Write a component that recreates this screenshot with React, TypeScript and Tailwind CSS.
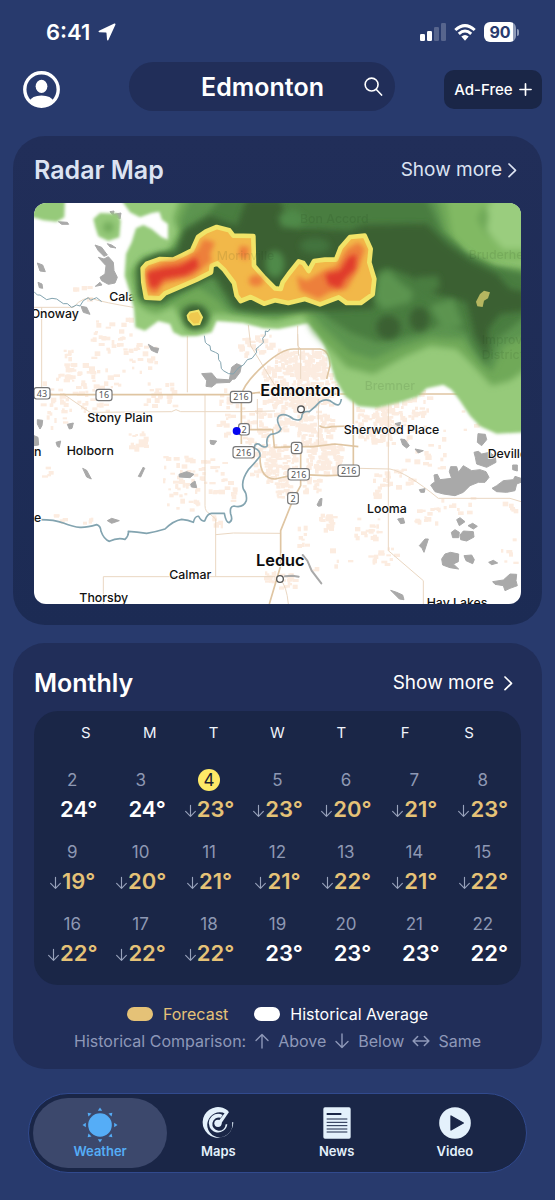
import React from 'react';

type Trend = 'below' | null;
type Day = { date: number; temp: number; trend: Trend; today?: boolean };

const weekdays = ['S', 'M', 'T', 'W', 'T', 'F', 'S'];

const below = (date: number, temp: number, today = false): Day => ({ date, temp, trend: 'below', today });
const average = (date: number, temp: number): Day => ({ date, temp, trend: null });

const weeks: Day[][] = [
  [average(2, 24), average(3, 24), below(4, 23, true), below(5, 23), below(6, 20), below(7, 21), below(8, 23)],
  [below(9, 19), below(10, 20), below(11, 21), below(12, 21), below(13, 22), below(14, 21), below(15, 22)],
  [below(16, 22), below(17, 22), below(18, 22), average(19, 23), average(20, 23), average(21, 23), average(22, 22)],
];

/* ---------- icons ---------- */

function Arrow({ dir, className }: { dir: 'up' | 'down' | 'both'; className: string }) {
  const d = {
    up: 'M8 15V1.5M2 7.5l6-6 6 6',
    down: 'M8 1v13.500M2 8.500l6 6 6-6',
    both: 'M1 8h14M5 4L1 8l4 4M11 4l4 4-4 4',
  }[dir];
  return (
    <svg viewBox="0 0 16 16" className={className} fill="none" stroke="currentColor" strokeWidth="1.4" strokeLinecap="round" strokeLinejoin="round" aria-hidden="true">
      <path d={d} />
    </svg>
  );
}

function Chevron() {
  return (
    <svg viewBox="0 0 9 16" className="h-4 w-[9px]" fill="none" stroke="currentColor" strokeWidth="1.7" strokeLinecap="round" strokeLinejoin="round" aria-hidden="true">
      <path d="M1 2l6.500 6.300L1 14.600" />
    </svg>
  );
}

function SunIcon() {
  return (
    <svg viewBox="0 0 108 108" className="size-9" fill="currentColor" aria-hidden="true">
      <circle cx="54" cy="54" r="35.500" />
      {[0, 45, 90, 135, 180, 225, 270, 315].map((a) => (
        <path key={a} d="M54 1.500L60.500 11.500H47.500Z" transform={`rotate(${a} 54 54)`} />
      ))}
    </svg>
  );
}

function RadarIcon() {
  return (
    <svg viewBox="0 0 96 96" className="size-8" aria-hidden="true">
      <path d="M80 13A46 46 0 1 0 94 46L90 46A37.500 37.500 0 1 1 70 20Z" fill="currentColor" />
      <path d="M62 24A28 28 0 1 0 76 52L71 52A20 20 0 1 1 56 32Z" fill="currentColor" />
      <circle cx="48" cy="49" r="11" fill="currentColor" />
      <path d="M50 42L73 12L81 15L56 52Z" fill="currentColor" />
    </svg>
  );
}

function NewsIcon() {
  return (
    <svg viewBox="0 0 96 96" className="size-8" aria-hidden="true">
      <rect x="7" y="1" width="82" height="94" rx="5" fill="currentColor" />
      <path d="M17 21H61" stroke="#1a2647" strokeWidth="6" />
      <path d="M17 36H79M17 46H79M17 56H79M17 66H79M17 75H79" stroke="#1a2647" strokeWidth="3" />
    </svg>
  );
}

function VideoIcon() {
  return (
    <svg viewBox="0 0 96 96" className="size-8" aria-hidden="true">
      <circle cx="48" cy="48" r="47.500" fill="currentColor" />
      <path d="M36 27L73 48L36 69Z" fill="#1a2647" stroke="#1a2647" strokeWidth="4" strokeLinejoin="round" />
    </svg>
  );
}

/* ---------- radar map ---------- */

// cx, cy, half width, half height, number of blocks
const settlements: number[][] = [
  [160, 275, 25, 25, 5], [250, 390, 60, 30, 14], [230, 440, 45, 25, 16], [150, 495, 60, 40, 26], [90, 570, 60, 50, 26],
  [210, 550, 60, 40, 22], [330, 480, 55, 45, 22], [390, 590, 45, 40, 22], [190, 615, 50, 30, 14], [90, 650, 35, 40, 14],
  [325, 730, 28, 30, 18], [460, 820, 60, 45, 26], [460, 890, 45, 45, 26], [560, 820, 45, 40, 14], [580, 880, 40, 30, 12],
  [560, 970, 20, 20, 6], [90, 960, 22, 12, 5], [170, 965, 18, 12, 4], [60, 810, 20, 30, 4], [600, 640, 35, 70, 22],
  [670, 440, 55, 30, 30], [680, 690, 40, 60, 50], [700, 800, 35, 50, 36], [730, 1140, 25, 20, 14], [765, 1150, 30, 25, 18],
  [810, 490, 75, 36, 120], [780, 560, 80, 55, 110], [860, 560, 60, 60, 80], [790, 640, 60, 55, 90], [850, 690, 60, 50, 80],
  [760, 780, 45, 45, 60], [885, 780, 50, 42, 90], [850, 860, 30, 22, 22], [770, 860, 30, 40, 34], [1040, 680, 60, 60, 90],
  [1120, 650, 70, 45, 40], [1180, 610, 30, 40, 16], [1060, 860, 25, 40, 20], [1120, 840, 30, 30, 12], [890, 970, 22, 22, 18],
  [820, 1010, 12, 40, 8], [1010, 990, 40, 30, 18], [1060, 1070, 45, 30, 14], [1190, 950, 40, 25, 12], [1270, 920, 60, 25, 12],
  [1190, 750, 60, 60, 18], [1340, 640, 50, 60, 8], [1440, 1060, 30, 40, 6], [1440, 930, 20, 20, 5], [900, 1070, 70, 50, 6],
];

function buildBlocks() {
  let seed = 41;
  const rand = () => {
    seed = (seed * 16807) % 2147483647;
    return seed / 2147483647;
  };
  return settlements.flatMap(([cx, cy, rx, ry, n]) =>
    Array.from({ length: n }, () => ({
      x: Math.round(cx + (rand() * 2 - 1) * rx - 6),
      y: Math.round(cy + (rand() * 2 - 1) * ry - 5),
      w: Math.round(7 + rand() * 12),
      h: Math.round(6 + rand() * 9),
    })),
  );
}

const blocks = buildBlocks();

const lakes = [
  'M195 138L215 145L232 168L222 172L205 155ZM205 175L222 180L235 173L250 190L252 215L262 235L255 252L235 256L215 245L210 235L225 225L228 200ZM196 262L210 250L216 258ZM232 134L245 138L258 147L240 144Z',
  'M85 68L112 70L116 76L95 76ZM240 38L252 36L250 46L273 42L270 60L250 50Z',
  'M22 192L38 198L46 218L30 216ZM24 250L36 255L38 268L28 266Z',
  'M153 322L170 325L180 346L160 340ZM355 436L372 446L386 448L382 462L364 454Z',
  'M515 524L545 522L560 540L605 543L600 550L560 552L545 564L528 562L530 545ZM605 505L620 494L634 500L630 520L615 540L598 542Z',
  'M22 662L38 664L36 680L30 690L22 675ZM112 676L130 672L126 688L118 690ZM78 730L92 726L88 745L82 742ZM12 710L24 715L26 738L12 740Z',
  'M158 808L170 814L184 840L170 834ZM325 832L340 804L344 808L332 834ZM447 826L470 818L492 826L480 836L448 834ZM482 855L495 846L500 866L484 864Z',
  'M232 965L245 958L268 965L245 973ZM540 724L560 726L552 737L542 735Z',
  'M1112 720L1125 722L1138 740L1130 747L1118 738ZM1155 750L1180 755L1165 762ZM1095 674L1112 670L1108 684Z',
  'M1344 704L1366 706L1370 722L1355 740L1342 730ZM1332 760L1345 757L1355 765L1378 760L1396 772L1398 790L1370 805L1340 795L1336 775Z',
  'M1202 858L1215 848L1212 828L1222 826L1230 842L1265 838L1258 818L1262 803L1280 803L1285 820L1300 800L1325 815L1350 812L1368 818L1377 835L1365 850L1345 850L1320 860L1300 880L1275 890L1240 885L1215 878Z',
  'M1386 868L1400 860L1420 845L1450 842L1455 832L1473 838L1473 850L1460 855L1455 875L1430 880L1400 878ZM1448 798L1462 798L1462 816L1448 812Z',
  'M1168 872L1185 869L1183 880L1172 880ZM861 918L870 900L876 898L874 920L866 922Z',
  'M1103 960L1120 957L1124 972L1112 974ZM1280 962L1290 956L1305 968L1288 980ZM1314 980L1328 973L1342 982L1330 990ZM1264 1000L1275 992L1288 1000L1286 1016L1268 1016ZM1290 1008L1300 996L1330 998L1332 1014L1310 1026L1292 1022Z',
  'M1168 1040L1185 1020L1195 1020L1188 1042L1182 1060L1176 1048ZM1235 1080L1245 1065L1262 1060L1286 1065L1285 1088L1270 1095L1286 1110L1260 1106L1238 1098ZM1302 1070L1325 1068L1333 1082L1328 1094L1308 1085Z',
  'M1376 1090L1390 1084L1403 1092L1385 1097ZM1388 1148L1420 1143L1440 1125L1460 1126L1458 1145L1462 1160L1440 1168L1425 1175L1420 1160L1395 1156ZM1082 1174L1100 1180L1118 1188L1122 1202L1108 1200Z',
];

const roads = [
  'M12 325H130M35 325V583M472 410V580M655 378L662 440L735 560M130 325Q160 290 190 300T310 325',
  'M100 585L180 640L425 638L438 632L452 638L640 638L735 636',
  'M525 588V920Q525 938 540 945L557 960V1133M557 1007L610 1002L752 1003M220 1215V1133H735',
  'M682 600V690M803 380V440L812 450V540M865 600V738M803 405L806 470',
  'M1075 588V1055L1180 1145V1215M985 808L1080 810Q1130 820 1225 898L1440 898L1473 908',
  'M750 1140Q770 1160 775 1215',
];

const highways = [
  'M12 587H630L690 580M690 585H980M1165 585H1473',
  'M634 735V590Q640 555 700 500Q755 450 790 450H870Q900 455 900 500L890 540',
  'M634 692H728L733 745L780 744M690 775Q690 840 735 840L800 826L890 830L955 828Q970 825 970 800V560',
  'M760 743L850 743L915 735L985 743M868 680Q880 690 905 683L960 681M812 745V860L790 900L752 995V1100L718 1215',
];

const radarCells =
  'M338 208L350 194L390 180L430 182L458 168L486 154L504 114L528 97L560 84L598 94L610 110L670 111L672 200L703 236L735 268L752 270L758 250L776 225L806 187L820 192L836 216L852 186L885 182L918 182L932 146L960 114L1004 110L1022 150L1018 190L1033 240L1028 286L992 312L950 312L926 295L870 316L825 300L775 312L735 304L702 314L662 294L632 306L620 290L612 252L582 212L562 193L545 200L543 220L500 242L440 268L405 283L390 298L348 296L340 250Z';

const shields: { x: number; y: number; label: string }[] = [
  { x: 36, y: 583, label: '43' },
  { x: 222, y: 588, label: '16' },
  { x: 633, y: 594, label: '216' },
  { x: 642, y: 691, label: '2' },
  { x: 641, y: 760, label: '216' },
  { x: 800, y: 747, label: '2' },
  { x: 806, y: 826, label: '216' },
  { x: 956, y: 815, label: '216' },
  { x: 789, y: 898, label: '2' },
];

const towns: { x: number; y: number; name: string }[] = [
  { x: 238, y: 306, name: 'Calahoo' },
  { x: 2, y: 357, name: 'Onoway' },
  { x: 172, y: 670, name: 'Stony Plain' },
  { x: 110, y: 768, name: 'Holborn' },
  { x: 12, y: 771, name: 'n' },
  { x: 12, y: 969, name: 'e' },
  { x: 418, y: 1141, name: 'Calmar' },
  { x: 148, y: 1208, name: 'Thorsby' },
  { x: 941, y: 706, name: 'Sherwood Place' },
  { x: 1373, y: 776, name: 'Deville' },
  { x: 1011, y: 941, name: 'Looma' },
  { x: 1190, y: 1225, name: 'Hay Lakes' },
];

function RadarMap() {
  return (
    <svg viewBox="12 12 1461 1203" className="block w-full rounded-xl bg-white" role="img" aria-label="Radar map around Edmonton">
      <defs>
        <filter id="crisp" x="-5%" y="-5%" width="110%" height="110%">
          <feGaussianBlur stdDeviation="2" />
        </filter>
        <filter id="soft" x="-10%" y="-10%" width="120%" height="120%">
          <feGaussianBlur stdDeviation="5" />
        </filter>
        <filter id="softer" x="-20%" y="-20%" width="140%" height="140%">
          <feGaussianBlur stdDeviation="9" />
        </filter>
        <filter id="hot" x="-30%" y="-30%" width="160%" height="160%">
          <feGaussianBlur stdDeviation="8" />
        </filter>
      </defs>

      <g fill="#fcece0">
        {blocks.map((b, i) => (
          <rect key={i} x={b.x} y={b.y} width={b.w} height={b.h} />
        ))}
      </g>
      <g fill="none" stroke="#ead7c2" strokeWidth="3">
        {roads.map((d) => <path key={d} d={d} />)}
      </g>
      <g fill="none" stroke="#dfc5a2" strokeWidth="5" strokeLinejoin="round">
        {highways.map((d) => <path key={d} d={d} />)}
      </g>
      <g fill="#a9a9a9" stroke="#a9a9a9" strokeWidth="3" strokeLinejoin="round">
        {lakes.map((d) => <path key={d} d={d} />)}
      </g>
      <path d="M818 1068L832 1085L845 1115L874 1153M765 1132L788 1130L806 1133" fill="none" stroke="#a9a9a9" strokeWidth="6" strokeLinecap="round" />
      <g fill="none" stroke="#83a4b0" strokeLinejoin="round">
        <path strokeWidth="3" d="M12 278L22 288L30 288L50 302L66 298L80 300L100 314L112 314L125 325L140 318L150 321L160 305L175 296L182 304L190 300L200 296L215 308" />
        <path strokeWidth="3" d="M523 410L526 430L532 436L540 440L542 454L556 460L565 465L566 482L572 490L574 508L580 515L596 524L610 525L626 506L640 498L652 482L666 478L680 460L678 450L688 442L700 430L698 418L706 408L706 396L714 398L720 390" />
        <path strokeWidth="5" d="M12 962Q70 960 100 972T150 985T200 977Q212 980 213 997Q222 1022 238 1027Q262 1015 285 1021Q297 1010 295 997Q320 998 350 1003Q380 998 405 990Q430 965 455 961Q475 962 490 970Q495 950 506 952Q515 968 524 966Q532 943 545 943L583 943Q588 970 597 971Q610 965 602 945Q598 922 612 921Q640 928 649 905Q652 885 640 870Q632 845 655 812Q680 785 690 772Q692 755 674 748Q672 732 686 735Q705 750 712 740Q706 716 722 706Q748 704 753 690Q735 660 748 650Q765 640 790 660Q812 668 815 655Q815 635 838 638Q858 622 870 608Q892 595 910 612Q930 628 934 600" />
      </g>

      <g fontFamily='"Noto Sans", sans-serif' fontSize="27" textAnchor="middle">
        {shields.map((s) => {
          const w = 16 + s.label.length * 16;
          return (
            <g key={`${s.x}-${s.y}`}>
              <rect x={s.x - w / 2} y={s.y - 17} width={w} height="34" rx="8" fill="#fff" stroke="#777" strokeWidth="3.500" />
              <text x={s.x} y={s.y + 10} fill="#555">{s.label}</text>
            </g>
          );
        })}
      </g>

      <circle cx="813" cy="631" r="10" fill="#fff" stroke="#555" strokeWidth="4" />
      <circle cx="750" cy="1140" r="10" fill="#fff" stroke="#555" strokeWidth="4" />
      <circle cx="620" cy="696" r="12" fill="#0505f0" />

      <g fontFamily="Inter, sans-serif" fontWeight="500" fontSize="37" fill="#111" stroke="#fff" strokeWidth="4" paintOrder="stroke">
        {towns.map((t) => <text key={t.name} x={t.x} y={t.y}>{t.name}</text>)}
      </g>
      <g fontFamily="Inter, sans-serif" fontWeight="600" fontSize="49" fill="#0c0c0c" stroke="#fff" strokeWidth="5" paintOrder="stroke">
        <text x="691" y="592">Edmonton</text>
        <text x="678" y="1102">Leduc</text>
      </g>

      <g filter="url(#soft)" fill="#96ca7a">
        <path d="M0 0H105L103 55L80 68L40 64L0 52Z" />
        <path d="M190 60L210 42L262 44L272 65L268 115L235 126L205 112L196 85Z" />
        <path d="M272 0L300 40L330 55L365 42L388 38L396 62L414 75L414 122L395 115L365 90L340 78L318 88L305 130L288 165L284 230L300 280L312 330L316 385L345 395L385 366L420 375L430 400L455 412L500 411L545 400L560 366L640 372L700 388L745 390L795 380L835 372L862 400L884 440L900 490L915 540L945 592L985 622L1040 626L1110 610L1165 592L1190 568L1240 557L1265 572L1290 605L1320 650L1350 682L1400 704L1490 700V0Z" />
      </g>
      <g filter="url(#softer)" fill="#6fa958">
        <path d="M450 0L430 60L445 100L410 165L340 175L300 220L322 310L350 335L380 345L430 320L445 345L470 395L530 385L545 345L600 345L735 368L820 345L850 400L900 450L950 505L1030 525L1120 475L1200 440L1280 450L1320 490L1385 560L1440 545L1490 510V205L1400 200L1330 180L1280 150L1385 150L1390 90L1360 0Z" />
        <circle cx="235" cy="85" r="16" />
        <path d="M1250 0H1490V20H1360L1340 60L1370 110L1490 130V190H1350L1270 130Z" fill="#81b963" />
        <path d="M1385 0H1490V150L1420 150L1370 95Z" fill="#9acd7e" />
      </g>
      <g filter="url(#softer)" fill="#5c9450">
        <path d="M480 0L450 70L470 110L420 165L350 180L325 220L328 300L400 320L450 290L500 260L560 300L600 340L740 352L830 325L880 385L960 460L1030 480L1120 440L1200 415L1300 420L1345 480L1385 520L1420 440L1490 410V225L1390 205L1310 165L1245 100L1220 0Z" />
      </g>
      <g filter="url(#softer)" fill="#4a7d40">
        <path d="M570 0L530 50L460 90L440 150L380 165L325 200L328 290L400 305L470 265L545 230L600 320L680 340L760 338L850 315L900 360L960 400L1040 430L1100 420L1180 400L1250 370L1310 400L1335 450L1370 500L1400 420L1490 350V225L1390 205L1310 165L1235 100L1190 0Z" />
        <path d="M450 335L480 318L520 322L540 350L520 385L485 388Z" />
      </g>
      <g filter="url(#softer)" fill="#3b6033">
        <path d="M435 175L465 95L540 50L620 80L650 0H750L770 70L800 90L860 90L960 95L1000 78L1190 74L1250 135L1320 185L1400 225L1440 270L1490 280V335L1410 345L1375 390L1372 470L1335 410L1310 310L1220 285L1140 230L1070 205L1040 220L1030 330L930 335L700 338L620 330L560 235L500 200Z" />
        <ellipse cx="1075" cy="385" rx="36" ry="36" />
        <ellipse cx="1168" cy="360" rx="30" ry="36" />
        <path d={radarCells} stroke="#3b6033" strokeWidth="26" strokeLinejoin="round" />
        <circle cx="495" cy="355" r="34" />
      </g>
      <g filter="url(#softer)">
        <ellipse cx="735" cy="195" rx="28" ry="40" fill="#4f8a48" />
        <ellipse cx="855" cy="140" rx="45" ry="24" fill="#42733c" />
        <path d="M1045 230L1075 215L1110 250L1150 280L1140 310L1060 330L1035 300Z" fill="#5c9450" />
        <path d="M1160 235L1225 230L1230 265L1190 290L1150 270Z" fill="#4a7d40" />
        <path d="M1200 320L1270 300L1300 380L1240 395Z" fill="#5c9450" />
        <path d="M745 50L790 30L830 60L800 85L755 85Z" fill="#4f8a48" />
      </g>
      <g filter="url(#crisp)">
        <path d={radarCells} fill="#f2b848" stroke="#f1e468" strokeWidth="14" strokeLinejoin="round" />
      </g>
      <g filter="url(#hot)" fill="#ed7f3a">
        <path d="M350 210L400 190L470 178L505 150L520 120L555 130L540 165L545 185L490 232L400 255L380 285L355 280Z" />
        <path d="M630 140L658 145L650 185L625 170Z" />
        <ellipse cx="678" cy="245" rx="22" ry="17" />
        <path d="M800 230L830 245L880 215L920 200L950 150L985 130L1005 150L985 210L950 270L900 280L865 300L810 275Z" />
      </g>
      <g filter="url(#hot)" fill="#e03a2c">
        <path d="M350 220L400 208L450 200L500 175L505 205L470 228L400 240L378 268L358 262Z" />
        <path d="M885 225L930 215L955 175L980 165L975 210L945 240L930 268L895 258Z" />
      </g>
      <g filter="url(#crisp)">
        <path d="M473 350L480 340L505 335L516 355L508 375L490 377L476 362Z" fill="#efc94f" stroke="#f1e468" strokeWidth="6" />
        <path d="M1338 308L1350 285L1362 275L1380 280L1374 298L1362 305L1358 324L1342 322Z" fill="#b5b660" />
      </g>
      <g fontFamily="Inter, sans-serif" fontWeight="500" fontSize="37" fill="#16300f" opacity="0.1">
        <text x="810" y="71">Bon Accord</text>
        <text x="560" y="182">Morinville</text>
        <text x="1316" y="180">Bruderheim</text>
        <text x="1004" y="574">Bremner</text>
        <text x="1355" y="434">Improve</text>
        <text x="1355" y="480">District</text>
      </g>
    </svg>
  );
}

/* ---------- page sections ---------- */

function StatusBar() {
  return (
    <div className="flex h-5 items-center justify-between pl-[46px] pr-9">
      <div className="flex items-center gap-2">
        <span className="text-[22px] leading-5 font-semibold">6:41</span>
        <svg viewBox="0 0 18 18" className="size-[18px]" fill="currentColor" aria-hidden="true">
          <path d="M16.300 .6L1 7.800Q-.2 8.700 1.200 9.200L8 9.600Q8.500 9.700 8.500 10.200L9 16.600Q9.500 18.200 10.400 16.900L17.400 1.800Q17.700 .1 16.300 .6Z" />
        </svg>
      </div>
      <div className="flex items-center gap-2">
        <svg viewBox="0 0 26 18" className="h-[18px] w-[26px]" fill="currentColor" aria-hidden="true">
          <rect x="0" y="11" width="5" height="7" rx="1.300" />
          <rect x="7" y="8" width="5" height="10" rx="1.300" />
          <rect x="14" y="4" width="5" height="14" rx="1.300" opacity=".22" />
          <rect x="21" y="0" width="5" height="18" rx="1.300" opacity=".22" />
        </svg>
        <svg viewBox="0 0 22 17" className="h-[17px] w-[22px]" fill="none" stroke="currentColor" strokeWidth="3" aria-hidden="true">
          <path d="M1.300 6Q11-2.800 20.700 6M4.800 9.800Q11 4.200 17.200 9.800" />
          <path d="M7.300 12.600Q11 9.400 14.700 12.600L11 16.800Z" fill="currentColor" stroke="none" />
        </svg>
        <div className="flex items-center gap-px">
          <span className="flex h-5 w-8 items-center justify-center rounded-md bg-linear-to-r from-white from-90% to-[#8f9bb8] to-90% text-base leading-5 font-bold text-[#283a6d]">90</span>
          <span className="h-[7px] w-0.5 rounded-r-full bg-[#8f9bb8]" />
        </div>
      </div>
    </div>
  );
}

function Header() {
  return (
    <header className="mt-5 flex items-start justify-between pl-[23px] pr-[13px]">
      <button type="button" aria-label="Account" className="mt-[9px]">
        <svg viewBox="0 0 104 104" className="size-[37px]" aria-hidden="true">
          <circle cx="52" cy="52" r="47" fill="none" stroke="currentColor" strokeWidth="9.500" />
          <ellipse cx="52" cy="43" rx="16.500" ry="18.500" fill="currentColor" />
          <path d="M17 86Q25 69 52 69Q79 69 87 86Q72 99 52 99Q32 99 17 86Z" fill="currentColor" />
        </svg>
      </button>
      <button type="button" className="ml-5 flex h-[49px] w-[266px] items-center rounded-full bg-[#212e59] px-3">
        <span className="flex-1 pl-5 text-center text-[25px] leading-8 font-semibold">Edmonton</span>
        <svg viewBox="0 0 20 20" className="size-[19px]" fill="none" stroke="currentColor" strokeWidth="1.700" strokeLinecap="round" aria-hidden="true">
          <circle cx="8" cy="8" r="6.800" />
          <path d="M13 13.200L18.500 19" />
        </svg>
      </button>
      <button type="button" className="mt-2 flex h-[39px] w-[98px] items-center justify-center gap-1.5 rounded-[10px] bg-[#1a2647]">
        <span className="text-[15px] leading-5 font-medium">Ad-Free</span>
        <svg viewBox="0 0 14 14" className="size-[13px]" stroke="currentColor" strokeWidth="1.800" strokeLinecap="round" aria-hidden="true">
          <path d="M7 1V13M1 7H13" />
        </svg>
      </button>
    </header>
  );
}

function TempCell({ day }: { day: Day }) {
  return (
    <td className="flex flex-col items-center p-0">
      <span className={day.today ? 'flex h-[22px] w-[22px] items-center justify-center rounded-full bg-[#fde967] text-[17px] leading-[22px] text-[#1b2030]' : 'text-[17px] leading-[22px] text-[#8e98b3]'}>
        {day.date}
      </span>
      <span className={day.trend ? 'mt-1.5 flex items-center text-[#e5c277]' : 'mt-1.5 flex items-center'}>
        {day.trend ? <Arrow dir="down" className="mt-1 h-3.5 w-[13px] text-[#98a2bb]" /> : <span className="w-[13px]" />}
        <span className="text-[22px] leading-6 font-semibold">{day.temp}°</span>
      </span>
    </td>
  );
}

function Nav() {
  const item = 'flex h-[70px] flex-1 flex-col items-center justify-center gap-1 text-[#e4f1fc]';
  const label = 'text-[13px] leading-4 font-semibold';
  return (
    <nav aria-label="Main" className="mx-7 mt-6 flex rounded-full border border-[#314a8e] bg-[#1a2647] px-3 py-1">
      <button type="button" aria-current="page" className="-mx-2 flex h-[70px] flex-[1_1_16px] flex-col items-center justify-center rounded-full bg-[#3c486c] text-[#55adf7]">
        <SunIcon />
        <span className={label}>Weather</span>
      </button>
      <button type="button" className={item}><RadarIcon /><span className={label}>Maps</span></button>
      <button type="button" className={item}><NewsIcon /><span className={label}>News</span></button>
      <button type="button" className={item}><VideoIcon /><span className={label}>Video</span></button>
    </nav>
  );
}

export default function App() {
  return (
    <div className="min-h-screen bg-[#283a6d] pt-[22px] pb-6 font-['Inter',sans-serif] text-white">
      <StatusBar />
      <Header />

      <main>
        <section className="mx-[13px] mt-[25px] rounded-[32px] bg-linear-to-b from-[#212e59] to-[#1c2b54] px-[21px] pt-[17px] pb-[21px] text-[#dce3f2]">
          <div className="flex h-[34px] items-center justify-between">
            <h2 className="text-[25px] leading-8 font-semibold">Radar Map</h2>
            <a href="#radar" className="flex items-center gap-1.5 pr-1 text-[19px] leading-6">Show more <Chevron /></a>
          </div>
          <div className="mt-4"><RadarMap /></div>
        </section>

        <section className="mx-[13px] mt-[18px] rounded-[32px] bg-[#212e59] px-[21px] pt-6 pb-4">
          <div className="flex h-8 items-center justify-between">
            <h2 className="text-[25px] leading-8 font-semibold">Monthly</h2>
            <a href="#monthly" className="flex items-center gap-2.5 pr-2 text-[19px] leading-6">Show more <Chevron /></a>
          </div>
          <table className="mt-3 block rounded-3xl bg-[#1a2647] pt-3 pb-5">
            <thead className="block px-5">
              <tr className="grid grid-cols-7">
                {weekdays.map((d, i) => (
                  <th key={i} scope="col" className="p-0 text-center text-[15px] leading-5 font-normal text-[#f0f4fb]">{d}</th>
                ))}
              </tr>
            </thead>
            <tbody className="mt-[26px] flex flex-col gap-5 px-1">
              {weeks.map((w) => (
                <tr key={w[0].date} className="grid grid-cols-7">
                  {w.map((d) => <TempCell key={d.date} day={d} />)}
                </tr>
              ))}
            </tbody>
          </table>
          <div className="mt-[17px] flex items-center justify-center text-base leading-6">
            <span className="h-[14px] w-[26px] rounded-full bg-[#e5c277]" />
            <span className="ml-2.5 text-[#e5c277]">Forecast</span>
            <span className="ml-[26px] h-[14px] w-[26px] rounded-full bg-white" />
            <span className="ml-2.5">Historical Average</span>
          </div>
          <div className="mt-[3px] flex items-center justify-center gap-2 text-base leading-6 text-[#8e98b8]">
            <span>Historical Comparison:</span>
            <Arrow dir="up" className="size-4" />
            <span>Above</span>
            <Arrow dir="down" className="size-4" />
            <span>Below</span>
            <Arrow dir="both" className="size-[18px]" />
            <span>Same</span>
          </div>
        </section>
      </main>

      <Nav />
    </div>
  );
}
